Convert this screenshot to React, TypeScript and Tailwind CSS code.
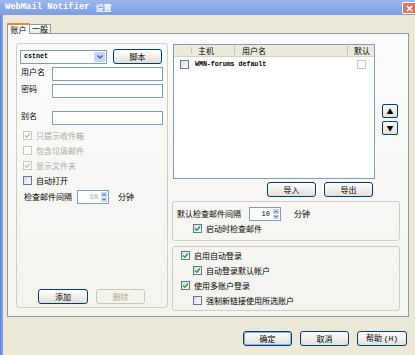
import React from "react";

const cjk = { fontFamily: '"Noto Sans CJK SC", "Noto Sans", sans-serif' };
const mono = { fontFamily: '"Liberation Mono", "DejaVu Sans Mono", monospace' };

function XPButton({
  label,
  w = "w-[49px]",
  disabled = false,
  primary = false,
}: {
  label: React.ReactNode;
  w?: string;
  disabled?: boolean;
  primary?: boolean;
}) {
  if (disabled) {
    return (
      <div className={`${w} h-[15px] rounded-[3px] border border-[#c9c7ba] bg-[#f5f4ea] flex items-center justify-center text-[8px] text-[#aca899]`}>
        {label}
      </div>
    );
  }
  return (
    <div
      className={`${w} h-[15px] rounded-[3px] border border-[#003c74] bg-gradient-to-b from-white to-[#e3e0d5] flex items-center justify-center text-[8px] text-black ${
        primary ? "shadow-[inset_0_0_0_1px_#8fb0f0]" : ""
      }`}
    >
      {label}
    </div>
  );
}

function Check({ checked = false, disabled = false }: { checked?: boolean; disabled?: boolean }) {
  return (
    <div
      className={`w-[9px] h-[9px] shrink-0 border flex items-center justify-center ${
        disabled
          ? "border-[#cac8bb] bg-white"
          : "border-[#5a7aa6] bg-gradient-to-br from-[#dcdcd7] to-white"
      }`}
    >
      {checked && (
        <svg width="7" height="7" viewBox="0 0 7 7">
          <polyline
            points="1,3.5 2.8,5.3 6,1.5"
            fill="none"
            stroke={disabled ? "#bdbab0" : "#21a121"}
            strokeWidth="1.4"
          />
        </svg>
      )}
    </div>
  );
}

function CheckRow({
  label,
  checked,
  disabled,
  indent,
}: {
  label: string;
  checked?: boolean;
  disabled?: boolean;
  indent: string;
}) {
  return (
    <div className={`h-[15px] flex items-center ${indent}`}>
      <Check checked={checked} disabled={disabled} />
      <span className={`ml-[4px] text-[8px] ${disabled ? "text-[#aca899]" : "text-black"}`}>{label}</span>
    </div>
  );
}

function Spinner({ gray = false }: { gray?: boolean }) {
  return (
    <div className="w-[32px] h-[14px] border border-[#7f9db9] bg-white flex items-stretch">
      <div
        className={`flex-1 flex items-center justify-end pr-[2px] text-[7px] ${gray ? "text-[#999]" : "text-black"}`}
        style={mono}
      >
        10
      </div>
      <div className="w-[8px] flex flex-col gap-[1px] p-[1px] bg-white">
        <div className="flex-1 bg-[#bfd0f8] rounded-[1px] flex items-center justify-center">
          <svg width="4" height="3" viewBox="0 0 4 3">
            <polyline points="0.5,2.5 2,1 3.5,2.5" fill="none" stroke="#4d6185" strokeWidth="1" />
          </svg>
        </div>
        <div className="flex-1 bg-[#bfd0f8] rounded-[1px] flex items-center justify-center">
          <svg width="4" height="3" viewBox="0 0 4 3">
            <polyline points="0.5,0.5 2,2 3.5,0.5" fill="none" stroke="#4d6185" strokeWidth="1" />
          </svg>
        </div>
      </div>
    </div>
  );
}

function TextBox() {
  return <div className="w-[111px] h-[14px] border border-[#7f9db9] bg-white" />;
}

export default function App() {
  return (
    <div className="w-[415px] h-[355px] bg-[#ece9d8] flex flex-col overflow-hidden" style={cjk}>
      {/* title bar */}
      <div className="h-[15px] shrink-0 bg-gradient-to-b from-[#9db7ee] to-[#7e9ee2] flex items-center pl-[5px]">
        <span className="text-[8.8px] font-bold text-white tracking-[0px]" style={{ ...mono, ...{} }}>
          WebMail Notifier
        </span>
        <span className="ml-[6px] text-[8px] font-bold text-white">设置</span>
        <div className="ml-auto mt-[1px] w-[13px] h-[12px] rounded-l-[2px] border border-r-0 border-white bg-[#d57a66] flex items-center justify-center">
          <svg width="7" height="7" viewBox="0 0 7 7">
            <path d="M1 1 L6 6 M6 1 L1 6" stroke="white" strokeWidth="1.5" />
          </svg>
        </div>
      </div>

      <div className="flex-1 flex">
        {/* window left border */}
        <div className="w-[3px] bg-gradient-to-r from-[#5f83db] to-[#8aa6e6]" />

        <div className="flex-1 flex flex-col">
          {/* tabs */}
          <div className="h-[18px] flex items-end pl-[4px]">
            <div className="w-[23px] h-[11px] bg-white border border-b-0 border-[#919b9c] border-t-2 border-t-[#e68b2c] flex items-center justify-center text-[8px] relative top-[1px]">
              账户
            </div>
            <div className="w-[21px] h-[9px] bg-gradient-to-b from-white to-[#ecebe5] border border-b-0 border-l-0 border-[#919b9c] flex items-center justify-center text-[8px]">
              一般
            </div>
          </div>

          {/* tab panel */}
          <div className="ml-[4px] w-[402px] h-[284px] border border-[#919b9c] bg-gradient-to-b from-[#fcfcfe] to-[#f4f3ee] flex pt-[9px] pl-[8px]">
            {/* left group */}
            <div className="w-[152px] h-[265px] rounded-[3px] border border-[#d0d0bf] flex flex-col">
              <div className="mt-[5px] ml-[3px] flex items-center">
                <div className="w-[87px] h-[14px] border border-[#7f9db9] bg-white flex items-center">
                  <span className="pl-[3px] text-[6.7px] font-bold" style={mono}>
                    cstnet
                  </span>
                  <div className="ml-auto mr-[1px] w-[11px] h-[10px] rounded-[1px] bg-[#c3d3fd] flex items-center justify-center">
                    <svg width="6" height="4" viewBox="0 0 6 4">
                      <polyline points="0.5,0.5 3,3 5.5,0.5" fill="none" stroke="#4d6185" strokeWidth="1.4" />
                    </svg>
                  </div>
                </div>
                <div className="ml-[6px]">
                  <XPButton label="脚本" />
                </div>
              </div>

              <div className="mt-[3px] ml-[4px] flex items-start">
                <span className="w-[31px] text-[8px] leading-[10px]">用户名</span>
                <TextBox />
              </div>
              <div className="mt-[3px] ml-[4px] flex items-start">
                <span className="w-[31px] text-[8px] leading-[10px]">密码</span>
                <TextBox />
              </div>
              <div className="mt-[13px] ml-[4px] flex items-start">
                <span className="w-[31px] text-[8px] leading-[10px]">别名</span>
                <TextBox />
              </div>

              <div className="mt-[3px] flex flex-col">
                <CheckRow label="只提示收件箱" checked disabled indent="pl-[6px]" />
                <CheckRow label="包含垃圾邮件" disabled indent="pl-[6px]" />
                <CheckRow label="显示文件夹" checked disabled indent="pl-[6px]" />
                <CheckRow label="自动打开" indent="pl-[6px]" />
              </div>

              <div className="mt-[2px] pl-[7px] flex items-center">
                <span className="w-[53px] text-[8px]">检查邮件间隔</span>
                <Spinner gray />
                <span className="ml-[9px] text-[8px]">分钟</span>
              </div>

              <div className="mt-auto mb-[3px] pl-[21px] flex items-center gap-[8px]">
                <XPButton label="添加" w="w-[50px]" />
                <XPButton label="删除" disabled />
              </div>
            </div>

            {/* right column */}
            <div className="ml-[4px] w-[228px] flex flex-col">
              <div className="mt-[1px] flex">
                <div className="ml-[1px] w-[202px] h-[135px] border border-[#7f9db9] bg-white flex flex-col">
                  <div className="h-[12px] bg-[#ebeadb] border-b border-[#d6d2c2] flex text-[8px]">
                    <div className="w-[18px] border-r border-[#c7c5b2] my-[2px]" />
                    <div className="w-[43px] border-r border-[#c7c5b2] my-[1px] pl-[6px] flex items-center">主机</div>
                    <div className="w-[113px] border-r border-[#c7c5b2] my-[1px] pl-[7px] flex items-center">用户名</div>
                    <div className="flex-1 pl-[6px] flex items-center">默认</div>
                  </div>
                  <div className="h-[15px] flex items-center">
                    <div className="ml-[6px]">
                      <Check />
                    </div>
                    <span className="ml-[6px] text-[6.6px] font-bold" style={mono}>
                      WMN-forums default
                    </span>
                    <div className="ml-auto mr-[8px]">
                      <Check disabled />
                    </div>
                  </div>
                </div>
                <div className="ml-[7px] mt-[60px] flex flex-col gap-[3px]">
                  <div className="w-[16px] h-[14px] rounded-[2px] border border-[#003c74] bg-gradient-to-b from-white to-[#e3e0d5] flex items-center justify-center text-[7px] leading-none">
                    ▲
                  </div>
                  <div className="w-[16px] h-[14px] rounded-[2px] border border-[#003c74] bg-gradient-to-b from-white to-[#e3e0d5] flex items-center justify-center text-[7px] leading-none">
                    ▼
                  </div>
                </div>
              </div>

              <div className="mt-[3px] pl-[95px] flex gap-[8px]">
                <XPButton label="导入" />
                <XPButton label="导出" />
              </div>

              <div className="mt-[4px] h-[40px] rounded-[3px] border border-[#d0d0bf] flex flex-col">
                <div className="mt-[5px] pl-[4px] flex items-center">
                  <span className="w-[72px] text-[8px]">默认检查邮件间隔</span>
                  <Spinner />
                  <span className="ml-[13px] text-[8px]">分钟</span>
                </div>
                <CheckRow label="启动时检查邮件" checked indent="pl-[20px]" />
              </div>

              <div className="mt-[5px] h-[65px] rounded-[3px] border border-[#d0d0bf] flex flex-col pt-[1px]">
                <CheckRow label="启用自动登录" checked indent="pl-[8px]" />
                <CheckRow label="自动登录默认帐户" checked indent="pl-[20px]" />
                <CheckRow label="使用多账户登录" checked indent="pl-[8px]" />
                <CheckRow label="强制新链接使用所选账户" indent="pl-[20px]" />
              </div>
            </div>
          </div>

          {/* dialog buttons */}
          <div className="mt-[14px] pr-[8px] flex justify-end gap-[8px]">
            <XPButton label="确定" primary />
            <XPButton label="取消" />
            <XPButton
              label={
                <span>
                  帮助 <span style={mono}>(H)</span>
                </span>
              }
              w="w-[50px]"
            />
          </div>
        </div>
      </div>
    </div>
  );
}
